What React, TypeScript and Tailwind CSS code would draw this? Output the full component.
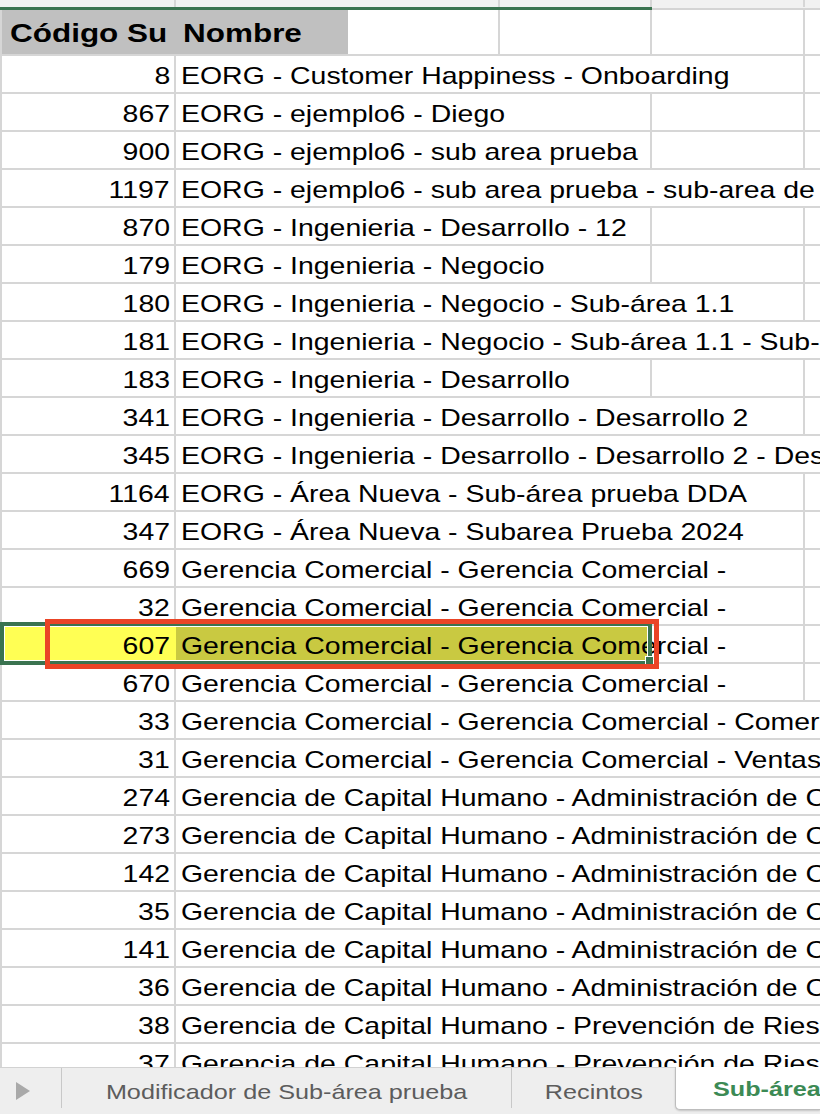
import React from "react";

type Span = "D" | "E" | "end";
type Row = { code: number; name: string; span: Span; selected?: boolean };

const rows: Row[] = [
  { code: 8, name: "EORG - Customer Happiness - Onboarding", span: "E" },
  { code: 867, name: "EORG - ejemplo6 - Diego", span: "D" },
  { code: 900, name: "EORG - ejemplo6 - sub area prueba", span: "D" },
  { code: 1197, name: "EORG - ejemplo6 - sub area prueba - sub-area de prueba", span: "end" },
  { code: 870, name: "EORG - Ingenieria - Desarrollo - 12", span: "D" },
  { code: 179, name: "EORG - Ingenieria - Negocio", span: "D" },
  { code: 180, name: "EORG - Ingenieria - Negocio - Sub-área 1.1", span: "E" },
  { code: 181, name: "EORG - Ingenieria - Negocio - Sub-área 1.1 - Sub-área 1.1.1", span: "end" },
  { code: 183, name: "EORG - Ingenieria - Desarrollo", span: "D" },
  { code: 341, name: "EORG - Ingenieria - Desarrollo - Desarrollo 2", span: "E" },
  { code: 345, name: "EORG - Ingenieria - Desarrollo - Desarrollo 2 - Desarrollo 3", span: "end" },
  { code: 1164, name: "EORG - Área Nueva - Sub-área prueba DDA", span: "E" },
  { code: 347, name: "EORG - Área Nueva - Subarea Prueba 2024", span: "E" },
  { code: 669, name: "Gerencia Comercial - Gerencia Comercial -", span: "E" },
  { code: 32, name: "Gerencia Comercial - Gerencia Comercial -", span: "E" },
  { code: 607, name: "Gerencia Comercial - Gerencia Comercial -", span: "E", selected: true },
  { code: 670, name: "Gerencia Comercial - Gerencia Comercial -", span: "E" },
  { code: 33, name: "Gerencia Comercial - Gerencia Comercial - Comercial", span: "end" },
  { code: 31, name: "Gerencia Comercial - Gerencia Comercial - Ventas", span: "end" },
  { code: 274, name: "Gerencia de Capital Humano - Administración de Capital Humano", span: "end" },
  { code: 273, name: "Gerencia de Capital Humano - Administración de Capital Humano", span: "end" },
  { code: 142, name: "Gerencia de Capital Humano - Administración de Capital Humano", span: "end" },
  { code: 35, name: "Gerencia de Capital Humano - Administración de Capital Humano", span: "end" },
  { code: 141, name: "Gerencia de Capital Humano - Administración de Capital Humano", span: "end" },
  { code: 36, name: "Gerencia de Capital Humano - Administración de Capital Humano", span: "end" },
  { code: 38, name: "Gerencia de Capital Humano - Prevención de Riesgos", span: "end" },
  { code: 37, name: "Gerencia de Capital Humano - Prevención de Riesgos", span: "end" },
];

function DataRow({ r }: { r: Row }) {
  const nameCellClass =
    r.span === "D"
      ? "w-[476px] shrink-0 border-r-2 border-[#d6d6d6]"
      : r.span === "E"
      ? "w-[629px] shrink-0 border-r-2 border-[#d6d6d6]"
      : "flex-1 min-w-0";
  return (
    <div className="flex h-[38px] shrink-0 border-b-2 border-l-2 border-[#d6d6d6]">
      <div
        className={
          "w-[174px] shrink-0 border-r-2 border-[#d6d6d6] flex items-center justify-end pr-[4px] pt-[3px] overflow-hidden " +
          (r.selected ? "bg-[#ffff54] border-r-[#ffff54]" : "")
        }
      >
        <span className="inline-block origin-right scale-x-[1.185] text-[24px] leading-none text-black">
          {r.code}
        </span>
      </div>
      <div
        className={
          nameCellClass +
          " flex items-center pl-[5px] pt-[3px] overflow-hidden whitespace-nowrap " +
          (r.selected ? "bg-[linear-gradient(to_right,#c9c941_472px,transparent_472px)]" : "")
        }
      >
        <span className="inline-block origin-left scale-x-[1.185] text-[24px] leading-none text-black">
          {r.name}
        </span>
      </div>
      {r.span === "D" && <div className="w-[153px] shrink-0 border-r-2 border-[#d6d6d6]" />}
      {r.span !== "end" && <div className="flex-1" />}
    </div>
  );
}

export default function App() {
  return (
    <div className="relative w-[820px] h-[1114px] overflow-hidden bg-white font-['Liberation_Sans',Arial,sans-serif] flex flex-col">
      <div className="h-[1067px] shrink-0 overflow-hidden flex flex-col">
        {/* column header strip */}
        <div className="flex h-[7px] shrink-0 bg-[#f1f1f1]">
          <div className="w-[176px] shrink-0 border-r-2 border-[#d6d6d6]" />
          <div className="w-[324px] shrink-0 border-r-2 border-[#d6d6d6]" />
          <div className="w-[152px] shrink-0 border-r-2 border-[#d6d6d6]" />
          <div className="w-[153px] shrink-0 border-r-2 border-[#d6d6d6]" />
          <div className="flex-1" />
        </div>
        <div className="flex h-[3px] shrink-0">
          <div className="w-[652px] shrink-0 bg-[#3a7350]" />
          <div className="flex-1 flex flex-col">
            <div className="h-px bg-[#f1f1f1]" />
            <div className="flex-1 bg-[#d4d4d4]" />
          </div>
        </div>
        {/* header row */}
        <div className="flex h-[46px] shrink-0 border-b-2 border-l-2 border-[#d6d6d6]">
          <div className="w-[346px] shrink-0 bg-[#c0c0c0] flex">
            <div className="w-[174px] shrink-0 flex items-center pl-[8px] pt-[2px] overflow-hidden whitespace-nowrap">
              <span className="inline-block origin-left scale-x-[1.21] text-[26px] font-bold leading-none text-black">
                Código Su
              </span>
            </div>
            <div className="flex-1 flex items-center pl-[7px] pt-[2px] whitespace-nowrap">
              <span className="inline-block origin-left scale-x-[1.21] text-[26px] font-bold leading-none text-black">
                Nombre
              </span>
            </div>
          </div>
          <div className="w-[152px] shrink-0 border-r-2 border-[#d6d6d6]" />
          <div className="w-[152px] shrink-0 border-r-2 border-[#d6d6d6]" />
          <div className="w-[153px] shrink-0 border-r-2 border-[#d6d6d6]" />
          <div className="flex-1" />
        </div>
        {rows.map((r, i) => (
          <DataRow key={i} r={r} />
        ))}
      </div>

      {/* sheet tabs */}
      <div className="h-[47px] shrink-0 flex bg-[#eeeeee] border-t border-[#d2d2d2]">
        <div className="w-[61px] shrink-0 flex items-center pl-[16px]">
          <svg width="14" height="18" viewBox="0 0 14 18">
            <polygon points="0,0 14,9 0,18" fill="#a9a9a9" />
          </svg>
        </div>
        <div className="w-px shrink-0 mb-[6px] bg-[#c8c8c8]" />
        <div className="w-[449px] shrink-0 flex items-center justify-center whitespace-nowrap">
          <span className="inline-block scale-x-[1.2] text-[21px] leading-none text-[#5c5c5c]">
            Modificador de Sub-área prueba
          </span>
        </div>
        <div className="w-px shrink-0 mb-[6px] bg-[#c8c8c8]" />
        <div className="w-[163px] shrink-0 flex items-center justify-center whitespace-nowrap">
          <span className="inline-block scale-x-[1.2] text-[21px] leading-none text-[#5c5c5c]">
            Recintos
          </span>
        </div>
        <div className="flex-1 -mt-px mb-[4px] bg-white border-l border-b border-[#bdbdbd] rounded-bl-[5px] shadow-[0_1px_2px_rgba(0,0,0,0.18)] flex items-center pl-[37px] whitespace-nowrap overflow-hidden">
          <span className="inline-block origin-left scale-x-[1.2] text-[21px] font-bold leading-none text-[#3c8a55]">
            Sub-área
          </span>
        </div>
      </div>

      {/* selection overlay */}
      <div className="absolute left-0 top-[622px] w-[652px] h-[43px] border-4 border-[#3a7350] shadow-[inset_0_0_0_1px_#ffffff] pointer-events-none" />
      <div className="absolute left-[645px] top-[656px] w-[9px] h-[9px] bg-[#3a7350] border border-white" />
      {/* red annotation */}
      <div className="absolute left-[45px] top-[619px] w-[614px] h-[50px] border-[5px] border-[#ea4426] pointer-events-none" />
    </div>
  );
}
